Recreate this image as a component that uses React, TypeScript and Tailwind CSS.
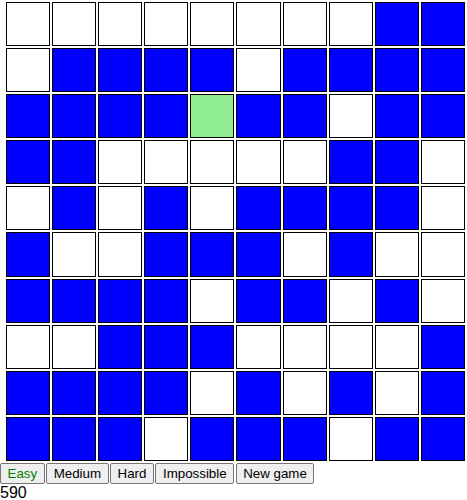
const rows = [
  'WWWWWWWWBB',
  'WBBBBWBBBB',
  'BBBBGBBWBB',
  'BBWWWWWBBW',
  'WBWBWBBBBW',
  'BWWBBBWBWW',
  'BBBBWBBWBW',
  'WWBBBWWWWB',
  'BBBBWBWBWB',
  'BBBWBBBWBB',
];

const cellColor: Record<string, string> = {
  W: 'bg-white',
  B: 'bg-[#0000ff]',
  G: 'bg-[#90ee90]',
};

const levels = ['Easy', 'Medium', 'Hard', 'Impossible', 'New game'];

export default function App() {
  return (
    <div className="font-['Liberation_Sans',Arial,sans-serif] text-black bg-white">
      <div className="pl-[6px] pt-[2px]">
        <div className="grid grid-cols-10 grid-rows-10 gap-[2px] w-[459px] h-[459px]">
          {rows.flatMap((row, r) =>
            row.split('').map((c, i) => (
              <div key={`${r}-${i}`} className={`border border-black ${cellColor[c]}`} />
            ))
          )}
        </div>
      </div>
      <div className="flex gap-[1.5px] mt-[2px]">
        {levels.map((l, i) => (
          <button
            key={l}
            className={`h-[21px] px-[6.5px] text-[13.33px] leading-none bg-[#efefef] border border-[#767676] rounded-[2px] ${
              i === 0 ? 'text-[#008000]' : 'text-black'
            }`}
          >
            {l}
          </button>
        ))}
      </div>
      <div className="text-[16px] leading-[18px]">590</div>
    </div>
  );
}
